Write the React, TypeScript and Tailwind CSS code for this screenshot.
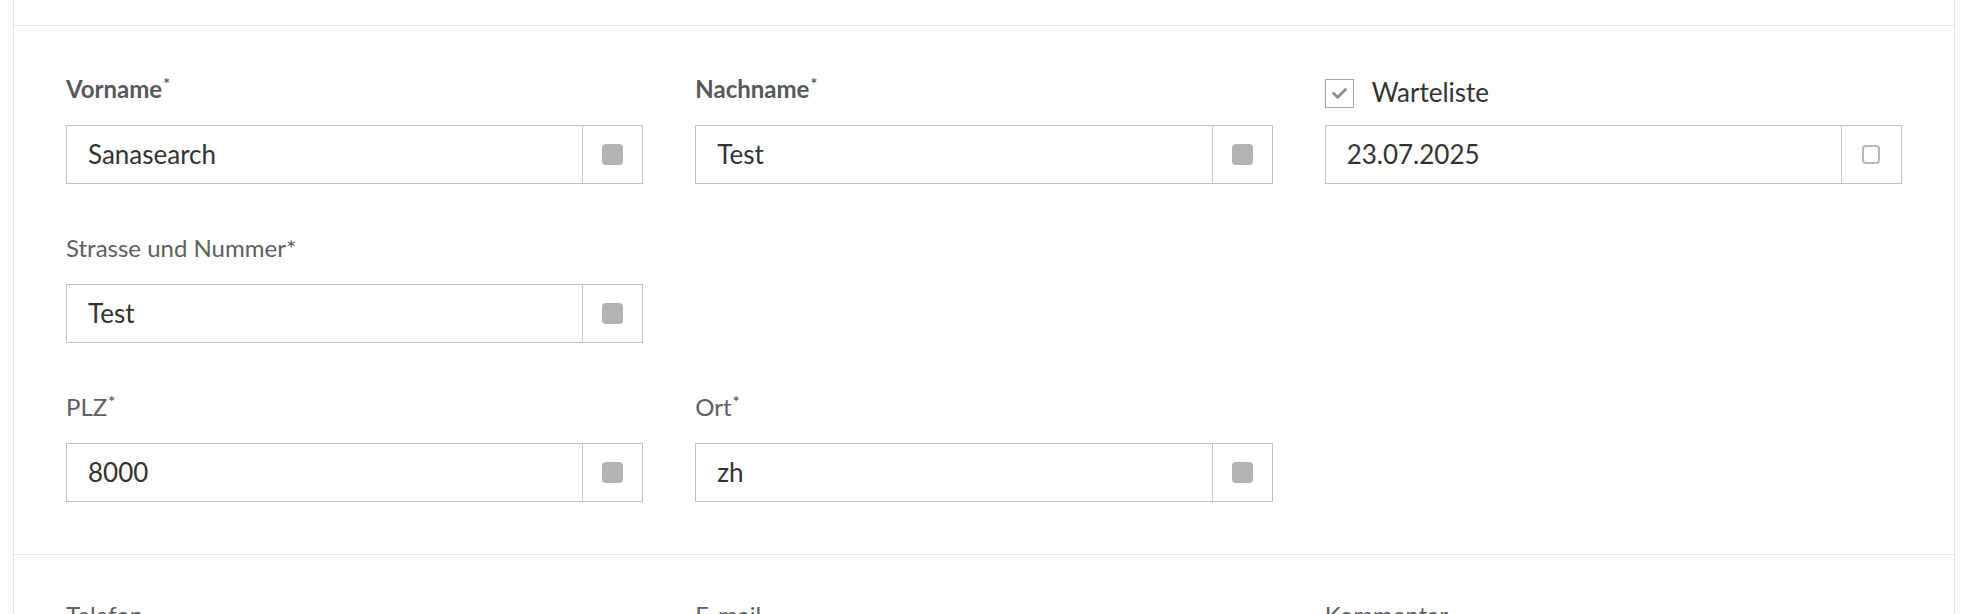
import { FaCheck } from 'react-icons/fa';

type Field = {
  label: string;
  value: string;
  bold?: boolean;
  sup?: boolean;
  star?: boolean;
  icon?: 'filled' | 'empty';
};

const addressRows: (Field | null)[][] = [
  [
    { label: 'Vorname', value: 'Sanasearch', bold: true, sup: true },
    { label: 'Nachname', value: 'Test', bold: true, sup: true },
    null,
  ],
  [{ label: 'Strasse und Nummer', value: 'Test', star: true }, null, null],
  [
    { label: 'PLZ', value: '8000', sup: true },
    { label: 'Ort', value: 'zh', sup: true },
    null,
  ],
];

function FieldLabel({ field }: { field: Field }) {
  return (
    <div
      className={`mb-5 h-8 text-[24px] leading-8 whitespace-nowrap ${field.bold ? 'font-bold text-[#58595b]' : 'text-[#5f6062]'}`}
    >
      {field.label}
      {field.star && '*'}
      {field.sup && <sup className="top-[-9px] ml-[1px] text-[16px] font-bold">*</sup>}
    </div>
  );
}

function FieldInput({ value, icon = 'filled' }: { value: string; icon?: 'filled' | 'empty' }) {
  return (
    <div className="flex h-[59px] border border-[#c2c2c2] bg-white">
      <div className="flex flex-1 items-center pl-[21px] text-[26px] text-[#333]">{value}</div>
      <div className="flex w-[60px] items-center justify-center border-l border-[#c8c8c8]">
        {icon === 'filled' ? (
          <span className="h-[21px] w-[21px] rounded-[4px] bg-[#b3b3b3]" />
        ) : (
          <span className="h-[19px] w-[18px] rounded-[4px] border-2 border-[#b8b8b8] bg-white" />
        )}
      </div>
    </div>
  );
}

function Warteliste() {
  return (
    <div>
      <div className="mb-5 flex h-8 items-start">
        <div className="mt-[6px] flex h-[29px] w-[29px] items-center justify-center border border-[#a6a6a6]">
          <FaCheck className="text-[15px] text-[#8f8f8f]" />
        </div>
        <span className="mt-[3px] ml-[18px] text-[26px] leading-8 text-[#333]">Warteliste</span>
      </div>
      <FieldInput value="23.07.2025" icon="empty" />
    </div>
  );
}

export default function App() {
  return (
    <div className="min-h-[614px] bg-white font-['Lato',sans-serif]">
      <div className="ml-[13px] w-[1942px] border-x border-[#e6e6e6]">
        <div className="h-[25px]" />

        <div className="grid grid-cols-3 gap-x-[52px] gap-y-[48px] border-t border-[#e6e6e6] px-[52px] pt-[47px] pb-[52px]">
          {addressRows.map((row, r) =>
            row.map((field, c) => {
              if (r === 0 && c === 2) return <Warteliste key="warteliste" />;
              if (!field) return <div key={`${r}-${c}`} />;
              return (
                <div key={`${r}-${c}`}>
                  <FieldLabel field={field} />
                  <FieldInput value={field.value} />
                </div>
              );
            })
          )}
        </div>

        <div className="grid grid-cols-3 gap-x-[52px] border-t border-[#e6e6e6] px-[52px] pt-[44px] pb-[52px]">
          {['Telefon', 'E-mail', 'Kommentar'].map((label) => (
            <div key={label}>
              <FieldLabel field={{ label, value: '' }} />
              <FieldInput value="" />
            </div>
          ))}
        </div>
      </div>
    </div>
  );
}
